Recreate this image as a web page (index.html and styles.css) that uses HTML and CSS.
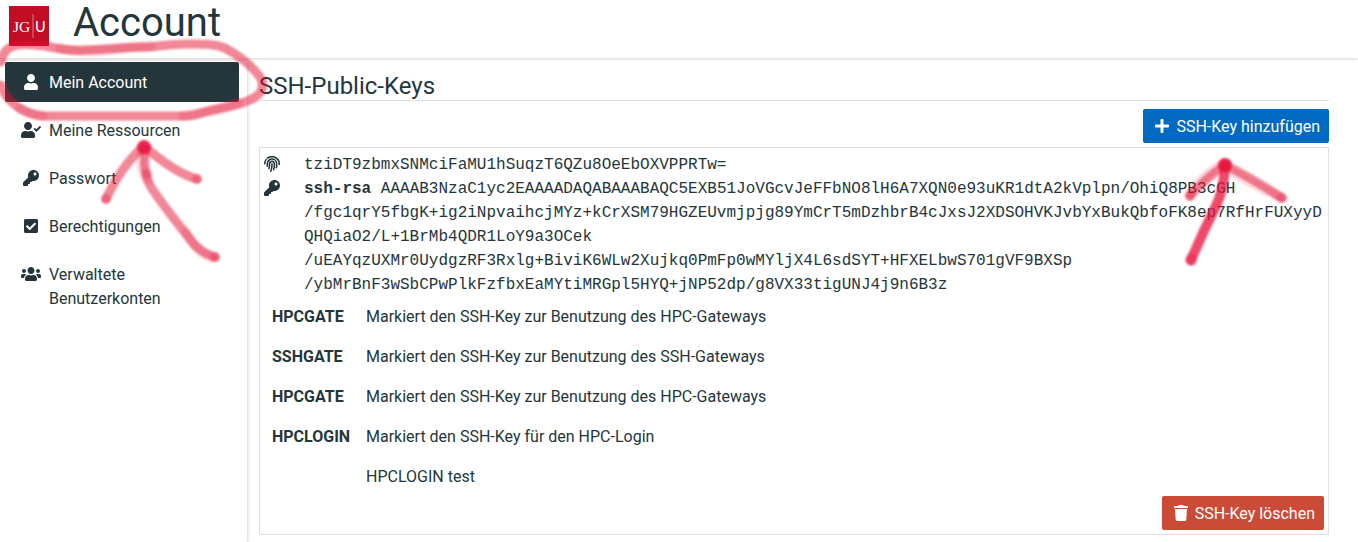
FILE: index.html
```html
<!DOCTYPE html>
<html lang="de">
<head>
<meta charset="utf-8">
<title>Account</title>
<link rel="stylesheet" href="styles.css">
</head>
<body>
<svg class="defs" width="0" height="0">
  <symbol id="user" viewBox="0 0 448 512"><path d="M224 256c70.7 0 128-57.3 128-128S294.7 0 224 0 96 57.3 96 128s57.3 128 128 128zm89.6 32h-16.7c-22.2 10.2-46.9 16-72.9 16s-50.6-5.8-72.9-16h-16.7C60.2 288 0 348.2 0 422.4V464c0 26.5 21.5 48 48 48h352c26.5 0 48-21.5 48-48v-41.6c0-74.2-60.2-134.4-134.4-134.4z"/></symbol>
  <symbol id="user-check" viewBox="0 0 640 512"><path d="M224 256c70.7 0 128-57.3 128-128S294.7 0 224 0 96 57.3 96 128s57.3 128 128 128zm89.6 32h-16.7c-22.2 10.2-46.9 16-72.9 16s-50.6-5.8-72.9-16h-16.7C60.2 288 0 348.2 0 422.4V464c0 26.5 21.5 48 48 48h352c26.5 0 48-21.5 48-48v-41.6c0-74.2-60.2-134.4-134.4-134.4z"/><path d="M637 159l-28-28c-4-4-10-4-13 0L494 234l-44-44c-4-4-10-4-13 0l-28 28c-4 4-4 10 0 13l79 79c4 4 10 4 13 0l136-138c4-4 4-9 0-13z"/></symbol>
  <symbol id="key" viewBox="0 0 512 512"><path d="M512 176.001C512 273.203 433.202 352 336 352c-11.22 0-22.19-1.062-32.827-3.069l-24.012 27.014A23.999 23.999 0 0 1 261.223 384H224v40c0 13.255-10.745 24-24 24h-40v40c0 13.255-10.745 24-24 24H24c-13.255 0-24-10.745-24-24v-78.059c0-6.365 2.529-12.47 7.029-16.971l161.802-161.802C163.108 213.814 160 195.271 160 176 160 78.798 238.797.001 335.999 0 433.488-.001 512 78.511 512 176.001zM336 128c0 26.51 21.49 48 48 48s48-21.49 48-48-21.49-48-48-48-48 21.49-48 48z"/></symbol>
  <symbol id="check-square" viewBox="0 0 448 512"><path d="M400 480H48c-26.51 0-48-21.49-48-48V80c0-26.51 21.49-48 48-48h352c26.51 0 48 21.49 48 48v352c0 26.51-21.49 48-48 48zm-204.686-98.059l184-184c6.248-6.248 6.248-16.379 0-22.627l-22.627-22.627c-6.248-6.248-16.379-6.249-22.628 0L184 302.745l-70.059-70.059c-6.248-6.248-16.379-6.248-22.628 0l-22.627 22.627c-6.248 6.248-6.248 16.379 0 22.627l104 104c6.249 6.25 16.379 6.25 22.628.001z"/></symbol>
  <symbol id="users" viewBox="0 0 640 512"><path d="M96 224c35.3 0 64-28.7 64-64s-28.7-64-64-64-64 28.7-64 64 28.7 64 64 64zm448 0c35.3 0 64-28.7 64-64s-28.7-64-64-64-64 28.7-64 64 28.7 64 64 64zm32 32h-64c-17.6 0-33.5 7.1-45.1 18.6 40.3 22.1 68.9 62 75.1 109.4h66c17.7 0 32-14.3 32-32v-32c0-35.3-28.7-64-64-64zm-256 0c61.9 0 112-50.1 112-112S381.9 32 320 32 208 82.1 208 144s50.1 112 112 112zm76.8 32h-8.3c-20.8 10-43.9 16-68.5 16s-47.6-6-68.5-16h-8.3C179.6 288 128 339.6 128 403.2V432c0 26.5 21.5 48 48 48h288c26.5 0 48-21.5 48-48v-28.8c0-63.6-51.6-115.2-115.2-115.2zm-223.7-13.4C161.5 263.1 145.6 256 128 256H64c-35.3 0-64 28.7-64 64v32c0 17.7 14.3 32 32 32h65.9c6.3-47.4 34.9-87.3 75.2-109.4z"/></symbol>
  <symbol id="plus" viewBox="0 0 448 512"><path d="M416 208H272V64c0-17.67-14.33-32-32-32h-32c-17.67 0-32 14.33-32 32v144H32c-17.67 0-32 14.33-32 32v32c0 17.67 14.33 32 32 32h144v144c0 17.67 14.33 32 32 32h32c17.67 0 32-14.33 32-32V304h144c17.67 0 32-14.33 32-32v-32c0-17.67-14.33-32-32-32z"/></symbol>
  <symbol id="trash" viewBox="0 0 448 512"><path d="M432 32H312l-9.4-18.7A24 24 0 0 0 281.1 0H166.8a23.72 23.72 0 0 0-21.4 13.3L136 32H16A16 16 0 0 0 0 48v32a16 16 0 0 0 16 16h416a16 16 0 0 0 16-16V48a16 16 0 0 0-16-16zM53.2 467a48 48 0 0 0 47.9 45h245.8a48 48 0 0 0 47.9-45L416 128H32z"/></symbol>
  <symbol id="fingerprint" viewBox="0 0 512 512"><g fill="none" stroke="currentColor" stroke-width="50" stroke-linecap="round"><path d="M24 246v-20C28 184 42 146 66 116M110 70C218-14 378 10 452 120Q492 180 487 270"/><path d="M106 330Q108 300 106 244C108 160 180 96 260 98C345 100 405 166 406 250Q407 320 398 374"/><path d="M158 400Q180 330 178 250C180 205 215 170 258 170C302 172 332 204 333 250Q336 350 310 440"/><path d="M256 250Q260 380 218 486"/></g></symbol>
</svg>

<header class="header">
  <svg class="logo" viewBox="0 0 40 40" role="img" aria-label="JGU">
    <rect width="40" height="40" fill="#c10d26"/>
    <text class="logo-serif" x="4" y="25.5">JG</text>
    <path d="M24 8v24" stroke="#dc7d89"/>
    <text class="logo-sans" x="26" y="25.5">U</text>
  </svg>
  <h1 class="title">Account</h1>
</header>

<div class="layout">
  <nav class="sidebar">
    <a class="nav-item active"><span class="nav-icon"><svg class="icon i14"><use href="#user"/></svg></span>Mein Account</a>
    <a class="nav-item"><span class="nav-icon"><svg class="icon i20"><use href="#user-check"/></svg></span>Meine Ressourcen</a>
    <a class="nav-item"><span class="nav-icon"><svg class="icon i16"><use href="#key"/></svg></span>Passwort</a>
    <a class="nav-item"><span class="nav-icon"><svg class="icon i14"><use href="#check-square"/></svg></span>Berechtigungen</a>
    <a class="nav-item"><span class="nav-icon"><svg class="icon i20"><use href="#users"/></svg></span>Verwaltete<br>Benutzerkonten</a>
  </nav>
  <main class="main">
    <h2 class="subtitle">SSH-Public-Keys</h2>
    <div class="toolbar"><button class="btn blue"><svg class="icon i14"><use href="#plus"/></svg>SSH-Key hinzufügen</button></div>
    <section class="card">
      <div class="key-row"><svg class="icon i16"><use href="#fingerprint"/></svg><code>tziDT9zbmxSNMciFaMU1hSuqzT6QZu8OeEbOXVPPRTw=</code></div>
      <div class="key-row"><svg class="icon i16"><use href="#key"/></svg><code><b>ssh-rsa</b> AAAAB3NzaC1yc2EAAAADAQABAAABAQC5EXB51JoVGcvJeFFbNO8lH6A7XQN0e93uKR1dtA2kVplpn/OhiQ8PB3cGH<br>/fgc1qrY5fbgK+ig2iNpvaihcjMYz+kCrXSM79HGZEUvmjpjg89YmCrT5mDzhbrB4cJxsJ2XDSOHVKJvbYxBukQbfoFK8ep7RfHrFUXyyD<br>QHQiaO2/L+1BrMb4QDR1LoY9a3OCek<br>/uEAYqzUXMr0UydgzRF3Rxlg+BiviK6WLw2Xujkq0PmFp0wMYljX4L6sdSYT+HFXELbwS701gVF9BXSp<br>/ybMrBnF3wSbCPwPlkFzfbxEaMYtiMRGpl5HYQ+jNP52dp/g8VX33tigUNJ4j9n6B3z</code></div>
      <dl class="tags">
        <dt>HPCGATE</dt><dd>Markiert den SSH-Key zur Benutzung des HPC-Gateways</dd>
        <dt>SSHGATE</dt><dd>Markiert den SSH-Key zur Benutzung des SSH-Gateways</dd>
        <dt>HPCGATE</dt><dd>Markiert den SSH-Key zur Benutzung des HPC-Gateways</dd>
        <dt>HPCLOGIN</dt><dd>Markiert den SSH-Key für den HPC-Login</dd>
        <dt></dt><dd>HPCLOGIN test</dd>
      </dl>
      <div class="card-actions"><button class="btn red"><svg class="icon i14"><use href="#trash"/></svg>SSH-Key löschen</button></div>
    </section>
  </main>
</div>

<svg class="marks" viewBox="0 0 1358 542">
  <g class="pen">
    <path d="M1 62C2 55 5 50 11 47C22 43 33 45 45 46C60 49 70 51 84 50C110 49 130 47 150 47C165 45 175 44 190 44C205 44 215 44 225 48C240 56 252 66 260 77C265 85 263 92 254 98C240 106 220 108 205 112Q194 116 183 116H43C25 114 6 103 1 85"/>
    <path class="faint" d="M20 109Q30 115 43 116M60 48Q84 54 110 50T150 46M183 116Q210 112 238 103"/>
    <path d="M106 199C116 178 130 158 144 146C160 160 178 174 197 179"/>
    <path d="M145 148C144 166 145 176 151 187C164 207 182 229 194 244Q202 253 215 257"/>
    <path class="faint" d="M143 150Q138 165 147 180M186 232Q195 251 212 258"/>
    <path d="M1190 196Q1206 178 1225 165Q1252 178 1282 198"/>
    <path class="faint" d="M1190 193Q1206 172 1225 163M1226 168Q1255 186 1278 196"/>
  </g>
  <path class="pen strong" d="M1225 165Q1224 190 1216 206Q1203 232 1191 260"/>
  <g class="dots">
    <circle cx="144" cy="147" r="7"/><circle cx="1225" cy="165" r="7"/>
    <circle class="soft" cx="147" cy="174" r="5"/>
    <circle class="soft" cx="106" cy="199" r="5"/><circle class="soft" cx="197" cy="179" r="5"/><circle class="soft" cx="215" cy="257" r="5"/>
    <circle class="soft" cx="1190" cy="196" r="5"/><circle class="soft" cx="1282" cy="198" r="5"/><circle class="soft" cx="1191" cy="260" r="6"/>
  </g>
</svg>
</body>
</html>
```
FILE: styles.css
```css
* { box-sizing: border-box; }
body {
  margin: 0;
  height: 542px;
  overflow: hidden;
  display: flex;
  flex-direction: column;
  background: #fff;
  color: #24363c;
  font: 16px/24px Roboto, "Liberation Sans", sans-serif;
}
.defs { position: absolute; }
.header {
  height: 58px;
  flex: none;
  display: flex;
  align-items: flex-start;
  gap: 24px;
  padding: 6px 9px 0;
  box-shadow: 0 1px 3px rgba(0, 0, 0, .16);
}
.logo { width: 40px; height: 40px; }
.logo-serif { font: 15.5px "Liberation Serif", serif; fill: #fff; }
.logo-sans { font: 14.5px Lato, sans-serif; fill: #fff; }
.title { margin: -7px 0 0; font-size: 40px; line-height: 48px; font-weight: 400; }
.layout { flex: 1; display: flex; min-height: 0; }
.sidebar {
  width: 247px;
  flex: none;
  margin-top: 3px;
  padding: 1px 8px 0 5px;
  display: flex;
  flex-direction: column;
  gap: 8px;
  box-shadow: 1px 0 3px rgba(0, 0, 0, .16);
}
.nav-item { padding: 9px 8px 7px 44px; border-radius: 2px; }
.nav-icon { float: left; width: 36px; height: 24px; margin: -1px 0 0 -36px; display: flex; align-items: center; justify-content: center; }
.active { background: #24363c; color: #fff; }
.icon { height: 16px; flex: none; fill: currentColor; }
.i14 { width: 14px; }
.i16 { width: 16px; }
.i20 { width: 20px; }
.main { flex: 1; padding: 13px 29px 0 12px; }
.subtitle { margin: 0; height: 30px; font-size: 24px; line-height: 31px; font-weight: 400; border-bottom: 1px solid #dee2e6; }
.toolbar { display: flex; justify-content: flex-end; padding: 8px 0 4px; }
.btn {
  display: flex;
  align-items: center;
  gap: 7px;
  height: 34px;
  padding: 2px 9px 0 12px;
  border: 0;
  border-radius: 2px;
  color: #fff;
  font: inherit;
}
.btn .icon { margin-bottom: 2px; }
.blue { background: #0069c0; }
.red { background: #ca4b37; }
.card { height: 388px; border: 1px solid #dee0e6; padding: 5px 4px 4px; }
.key-row { display: grid; grid-template-columns: 16px 1fr; column-gap: 24px; }
.key-row .icon { margin-top: 3px; }
code { font: 16px/24px "Liberation Mono", monospace; white-space: nowrap; }
.tags { margin: 0; display: grid; grid-template-columns: 94px 1fr; padding-left: 8px; }
.tags dt, .tags dd { margin: 0; padding: 8px 0; min-height: 40px; }
.tags dt { font-weight: 700; }
.card-actions { display: flex; justify-content: flex-end; margin-top: -1px; }
.marks { position: absolute; left: 0; top: 0; width: 1358px; height: 542px; pointer-events: none; }
.pen { fill: none; stroke: #e3102f; stroke-opacity: .5; stroke-width: 9; stroke-linecap: round; stroke-linejoin: round; filter: blur(.8px); }
.faint { stroke-opacity: .16; stroke-width: 10; }
.strong { stroke: #e8123c; stroke-opacity: .76; stroke-width: 10; }
.dots { fill: #e8123f; fill-opacity: .8; filter: blur(1px); }
.soft { fill-opacity: .3; }
```
